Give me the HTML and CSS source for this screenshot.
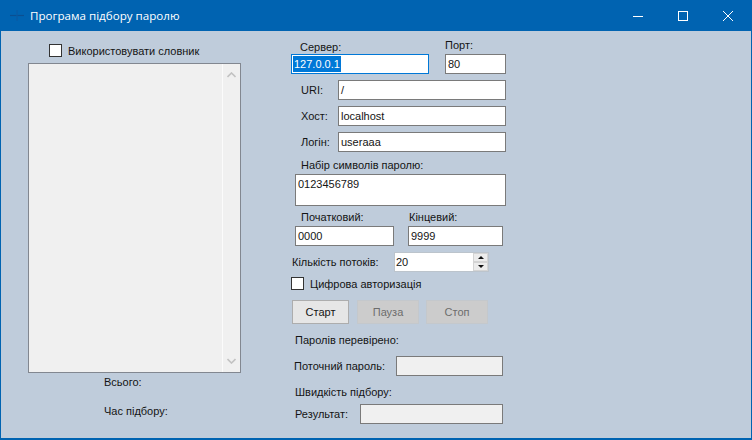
FILE: index.html
```html
<!DOCTYPE html>
<html lang="uk">
<head>
  <meta charset="UTF-8">
  <meta name="viewport" content="width=device-width, initial-scale=1.0">
  <title>Програма підбору паролю</title>
  <link rel="stylesheet" href="styles.css">
</head>
<body>
  <div class="window">
    <div class="titlebar">
      <svg class="app-icon" width="16" height="16" viewBox="0 0 16 16">
        <path d="M1 7.5h14" stroke="#0a4f92" stroke-width="1.2" fill="none"/>
        <path d="M8 2v11" stroke="#0a5aa3" stroke-width="1.2" fill="none"/>
      </svg>
      <span class="title">Програма підбору паролю</span>
      <div class="caption-btn">
        <svg width="12" height="12" viewBox="0 0 12 12"><path d="M1 6.5h10" stroke="#fff" fill="none"/></svg>
      </div>
      <div class="caption-btn">
        <svg width="12" height="12" viewBox="0 0 12 12"><rect x="1.5" y="1.5" width="9" height="9" stroke="#fff" fill="none"/></svg>
      </div>
      <div class="caption-btn">
        <svg width="12" height="12" viewBox="0 0 12 12"><path d="M1 1l10 10M11 1L1 11" stroke="#fff" fill="none"/></svg>
      </div>
    </div>

    <div class="content">
      <div class="left">
        <div class="check-row dict-check">
          <span class="checkbox"></span>
          <span>Використовувати словник</span>
        </div>
        <div class="listbox">
          <div class="list-items"></div>
          <div class="scrollbar">
            <svg width="9" height="6" viewBox="0 0 9 6"><path d="M0.5 5L4.5 1l4 4" stroke="#c2c2c2" stroke-width="1.6" fill="none"/></svg>
            <svg width="9" height="6" viewBox="0 0 9 6"><path d="M0.5 1L4.5 5l4-4" stroke="#c2c2c2" stroke-width="1.6" fill="none"/></svg>
          </div>
        </div>
        <div class="label total-label">Всього:</div>
        <div class="label time-label">Час підбору:</div>
      </div>

      <div class="right">
        <div class="server-row">
          <div class="server-col">
            <div class="label server-label">Сервер:</div>
            <div class="field field-focus"><span class="selected">127.0.0.1</span></div>
          </div>
          <div class="port-col">
            <div class="label port-label">Порт:</div>
            <div class="field">80</div>
          </div>
        </div>

        <div class="row">
          <span class="label row-label">URI:</span>
          <div class="field grow">/</div>
        </div>
        <div class="row">
          <span class="label row-label">Хост:</span>
          <div class="field grow">localhost</div>
        </div>
        <div class="row">
          <span class="label row-label">Логін:</span>
          <div class="field grow">useraaa</div>
        </div>

        <div class="label charset-label">Набір символів паролю:</div>
        <div class="field charset">0123456789</div>

        <div class="range-row">
          <div class="range-start">
            <div class="label start-label">Початковий:</div>
            <div class="field">0000</div>
          </div>
          <div class="range-end">
            <div class="label end-label">Кінцевий:</div>
            <div class="field">9999</div>
          </div>
        </div>

        <div class="row threads-row">
          <span class="label threads-label">Кількість потоків:</span>
          <div class="spinner">
            <div class="spinner-value">20</div>
            <div class="spinner-btns">
              <div class="spin-btn"><span class="arrow-up"></span></div>
              <div class="spin-btn"><span class="arrow-down"></span></div>
            </div>
          </div>
        </div>

        <div class="check-row digital-check">
          <span class="checkbox"></span>
          <span>Цифрова авторизація</span>
        </div>

        <div class="buttons">
          <div class="btn btn-start">Старт</div>
          <div class="btn btn-pause disabled">Пауза</div>
          <div class="btn btn-stop disabled">Стоп</div>
        </div>

        <div class="label checked-label">Паролів перевірено:</div>
        <div class="row current-row">
          <span class="label current-label">Поточний пароль:</span>
          <div class="field readonly current-field"></div>
        </div>
        <div class="label speed-label">Швидкість підбору:</div>
        <div class="row result-row">
          <span class="label result-label">Результат:</span>
          <div class="field readonly result-field"></div>
        </div>
      </div>
    </div>
  </div>
</body>
</html>
```

FILE: styles.css
```css
* {
  box-sizing: border-box;
}
body {
  margin: 0;
  font-family: "Liberation Sans", Arial, sans-serif;
  font-size: 11px;
  color: #141414;
}
.window {
  width: 752px;
  height: 440px;
  background-color: #bfccdb;
  border: 1px solid #0063b1;
  border-top: 0;
  border-bottom-width: 2px;
  overflow: hidden;
}
.titlebar {
  display: flex;
  align-items: center;
  height: 31px;
  margin: 0 -1px;
  padding-left: 9px;
  padding-right: 2px;
  background-color: #0063b1;
  color: #fff;
}
.app-icon {
  margin-right: 5px;
}
.title {
  flex: 1;
  font-family: "Open Sans", sans-serif;
  font-size: 11.6px;
}
.caption-btn {
  display: flex;
  align-items: center;
  justify-content: center;
  width: 45px;
  height: 31px;
}
.content {
  display: flex;
}
.left {
  width: 213px;
  margin-left: 27px;
  padding-top: 13px;
}
.right {
  width: 215px;
  margin-left: 50px;
  padding-top: 7px;
}
.label {
  height: 14px;
  line-height: 14px;
  white-space: nowrap;
}
.check-row {
  display: flex;
  align-items: center;
  height: 13px;
  white-space: nowrap;
}
.checkbox {
  width: 13px;
  height: 13px;
  margin-right: 6px;
  background-color: #fff;
  border: 1px solid #333;
}
.dict-check {
  margin-left: 21px;
}
.listbox {
  display: flex;
  height: 310px;
  margin-top: 6px;
  background-color: #f0f0f0;
  border: 1px solid #828790;
}
.list-items {
  flex: 1;
}
.scrollbar {
  display: flex;
  flex-direction: column;
  align-items: center;
  justify-content: space-between;
  width: 18px;
  padding: 8px 0;
  border-left: 1px solid #fbfbfb;
}
.total-label {
  margin-top: 2px;
  margin-left: 76px;
}
.time-label {
  margin-top: 15px;
  margin-left: 76px;
}
.field {
  height: 20px;
  padding-left: 2px;
  line-height: 18px;
  background-color: #fff;
  border: 1px solid #7a7a7a;
  white-space: nowrap;
}
.grow {
  flex: 1;
}
.readonly {
  background-color: #f0f0f0;
}
.server-row {
  display: flex;
  align-items: flex-end;
}
.server-col {
  width: 138px;
}
.server-label {
  padding-left: 9px;
}
.field-focus {
  padding-left: 1px;
  border-color: #0078d7;
}
.selected {
  display: inline-block;
  height: 16px;
  padding: 0 1px;
  line-height: 16px;
  background-color: #0078d7;
  color: #fff;
}
.port-col {
  width: 61px;
  margin-left: 16px;
}
.port-label {
  margin-bottom: 2px;
}
.row {
  display: flex;
  align-items: center;
  margin-top: 6px;
}
.row-label {
  width: 47px;
  padding-left: 10px;
}
.charset-label {
  margin-top: 6px;
  padding-left: 10px;
}
.charset {
  width: 211px;
  height: 32px;
  margin-top: 2px;
  margin-left: 4px;
  padding-top: 2px;
  line-height: 14px;
}
.range-row {
  display: flex;
  margin-top: 4px;
  margin-left: 4px;
}
.range-row .label {
  margin-bottom: 2px;
}
.range-start {
  width: 99px;
}
.start-label {
  padding-left: 6px;
}
.range-end {
  width: 95px;
  margin-left: 14px;
}
.end-label {
  padding-left: 1px;
}
.threads-label {
  width: 103px;
  padding-left: 1px;
}
.spinner {
  display: flex;
  width: 95px;
  height: 20px;
  background-color: #fff;
  border: 1px solid #bcc4cc;
}
.spinner-value {
  flex: 1;
  padding-left: 1px;
  line-height: 18px;
}
.spinner-btns {
  display: flex;
  flex-direction: column;
  width: 15px;
}
.spin-btn {
  display: flex;
  flex: 1;
  align-items: center;
  justify-content: center;
  background-color: #ececec;
  border: 1px solid #d4d4d4;
}
.arrow-up, .arrow-down {
  width: 0;
  height: 0;
  border-left: 3px solid transparent;
  border-right: 3px solid transparent;
}
.arrow-up {
  border-bottom: 3px solid #111;
}
.arrow-down {
  border-top: 3px solid #111;
}
.digital-check {
  margin-top: 5px;
}
.buttons {
  display: flex;
  margin-top: 10px;
  margin-left: 1px;
}
.btn {
  display: flex;
  align-items: center;
  justify-content: center;
  height: 24px;
  background-color: #e6e6e6;
  border: 1px solid #adadad;
}
.btn-start {
  width: 57px;
}
.btn-pause {
  width: 62px;
  margin-left: 8px;
}
.btn-stop {
  width: 62px;
  margin-left: 7px;
}
.disabled {
  background-color: #cccccc;
  border-color: #c4c8cc;
  color: #6d6d6d;
}
.checked-label {
  margin-top: 9px;
  padding-left: 4px;
}
.current-row {
  margin-top: 9px;
}
.current-label {
  width: 105px;
  padding-left: 3px;
}
.current-field {
  width: 107px;
}
.speed-label {
  margin-top: 9px;
  padding-left: 4px;
}
.result-row {
  margin-top: 5px;
}
.result-label {
  width: 69px;
  padding-left: 4px;
}
.result-field {
  width: 143px;
}
```
